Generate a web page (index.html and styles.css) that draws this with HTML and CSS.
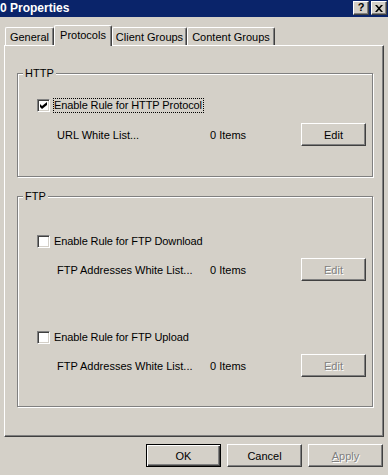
FILE: index.html
```html
<!DOCTYPE html>
<html lang="en">
<head>
  <meta charset="UTF-8" />
  <title>0 Properties</title>
  <link rel="stylesheet" href="styles.css">
</head>
<body>

  <div class="titlebar">
    <span class="title">0 Properties</span>
    <div class="caption-buttons">
      <span class="cap-btn cap-help">?</span>
      <span class="cap-btn">
        <svg width="8" height="7" viewBox="0 0 8 7">
          <path d="M0 0h2l2 2.2L6 0h2L5 3.5 8 7H6L4 4.8 2 7H0l3-3.5z" fill="#000"/>
        </svg>
      </span>
    </div>
  </div>

  <div class="tabs">
    <div class="tab tab-general">General</div>
    <div class="tab tab-protocols active">Protocols</div>
    <div class="tab tab-clients">Client Groups</div>
    <div class="tab tab-content">Content Groups</div>
  </div>

  <div class="panel">
    <fieldset class="group group-http">
      <legend>HTTP</legend>
      <div class="check-row">
        <span class="checkbox">
          <svg width="7" height="7" viewBox="0 0 7 7">
            <path d="M0 2l2 2 5-4v3L2 7 0 5z" fill="#000"/>
          </svg>
        </span>
        <span class="check-label focus">Enable Rule for HTTP Protocol</span>
      </div>
      <div class="list-row first">
        <span class="list-name">URL White List...</span>
        <span class="list-count">0 Items</span>
        <button class="btn edit-btn">Edit</button>
      </div>
    </fieldset>

    <fieldset class="group group-ftp">
      <legend>FTP</legend>
      <div class="check-row ftp-download">
        <span class="checkbox"></span>
        <span class="check-label">Enable Rule for FTP Download</span>
      </div>
      <div class="list-row">
        <span class="list-name">FTP Addresses White List...</span>
        <span class="list-count">0 Items</span>
        <button class="btn edit-btn" disabled>Edit</button>
      </div>
      <div class="check-row ftp-upload">
        <span class="checkbox"></span>
        <span class="check-label">Enable Rule for FTP Upload</span>
      </div>
      <div class="list-row">
        <span class="list-name">FTP Addresses White List...</span>
        <span class="list-count">0 Items</span>
        <button class="btn edit-btn" disabled>Edit</button>
      </div>
    </fieldset>
  </div>

  <div class="dialog-buttons">
    <button class="btn default">OK</button>
    <button class="btn">Cancel</button>
    <button class="btn" disabled><u>A</u>pply</button>
  </div>

</body>
</html>
```

FILE: styles.css
```css
* {
  box-sizing: border-box;
  margin: 0;
  padding: 0;
}

body {
  width: 388px;
  height: 475px;
  overflow: hidden;
  background: #d4d0c8;
  color: #000;
  font-family: "Liberation Sans", Arial, sans-serif;
  font-size: 11px;
}

/* Title bar */
.titlebar {
  height: 17px;
  background: #0a246a;
  display: flex;
  justify-content: space-between;
  align-items: flex-start;
  padding: 1px 1px 0 0;
}

.title {
  color: #fff;
  font-weight: bold;
  font-size: 12px;
  line-height: 15px;
}

.caption-buttons {
  display: flex;
  gap: 2px;
}

.cap-btn {
  width: 16px;
  height: 14px;
  display: flex;
  align-items: center;
  justify-content: center;
  background: #d4d0c8;
  border: 1px solid;
  border-color: #fff #404040 #404040 #fff;
  box-shadow: inset -1px -1px 0 #808080;
}

.cap-help {
  font-weight: bold;
  font-size: 11px;
  line-height: 1;
  padding-bottom: 1px;
}

/* Tabs */
.tabs {
  display: flex;
  align-items: flex-end;
  height: 20px;
  margin-top: 8px;
  padding-left: 5px;
  position: relative;
  z-index: 1;
}

.tab {
  height: 18px;
  text-align: center;
  line-height: 17px;
  padding-top: 1px;
  background: #d4d0c8;
  border-top: 1px solid #fff;
  border-left: 1px solid #fff;
  border-right: 1px solid #404040;
  border-radius: 2px 2px 0 0;
  box-shadow: inset -1px 0 0 #808080;
}

.tab.active {
  height: 21px;
  margin-bottom: -1px;
  padding-top: 0;
  line-height: 18px;
}

.tab-general { width: 49px; }
.tab-protocols { width: 58px; }
.tab-clients { width: 75px; }
.tab-content { width: 88px; }

/* Tab page */
.panel {
  width: 380px;
  margin-left: 4px;
  padding: 21px 10px 29px 12px;
  border: 1px solid;
  border-color: #fff #404040 #404040 #fff;
  box-shadow: inset -1px -1px 0 #808080;
}

.group {
  width: 356px;
  border: 1px solid #808080;
  box-shadow: inset 1px 1px 0 #fff, 1px 1px 0 #fff;
  padding: 0 5px 0 19px;
}

.group legend {
  margin-left: -14px;
  padding: 0 2px;
  line-height: 13px;
  background: #d4d0c8;
}

.group-http {
  padding-bottom: 30px;
}

.group-ftp {
  margin-top: 13px;
  padding-bottom: 29px;
}

.check-row {
  display: flex;
  align-items: center;
  height: 13px;
  margin-top: 19px;
}

.ftp-download { margin-top: 32px; }
.ftp-upload { margin-top: 50px; }

.checkbox {
  width: 13px;
  height: 13px;
  flex: none;
  display: flex;
  align-items: center;
  justify-content: center;
  background: #fff;
  border: 1px solid;
  border-color: #808080 #fff #fff #808080;
  box-shadow: inset 1px 1px 0 #404040, inset -1px -1px 0 #d4d0c8;
}

.check-label {
  margin-left: 3px;
  padding-right: 1px;
  line-height: 13px;
  letter-spacing: -0.1px;
  border: 1px solid transparent;
}

.check-label.focus {
  border: 1px dotted #000;
}

.list-row {
  display: flex;
  align-items: center;
  height: 23px;
  margin-top: 10px;
  padding-left: 20px;
}

.list-row.first { margin-top: 11px; }

.list-name { width: 153px; }
.list-count { width: 91px; }

/* Buttons */
.btn {
  font: inherit;
  color: #000;
  background: #d4d0c8;
  border: 1px solid;
  border-color: #fff #404040 #404040 #fff;
  box-shadow: inset -1px -1px 0 #808080;
  height: 23px;
}

.btn:disabled {
  color: #808080;
  text-shadow: 1px 1px 0 #fff;
}

.edit-btn {
  width: 65px;
}

.dialog-buttons {
  display: flex;
  justify-content: flex-end;
  gap: 6px;
  margin-top: 7px;
  padding-right: 5px;
}

.dialog-buttons .btn {
  width: 75px;
}

.btn.default {
  border: 1px solid #000;
  box-shadow: inset 1px 1px 0 #fff, inset -1px -1px 0 #404040, inset -2px -2px 0 #808080;
}
```
